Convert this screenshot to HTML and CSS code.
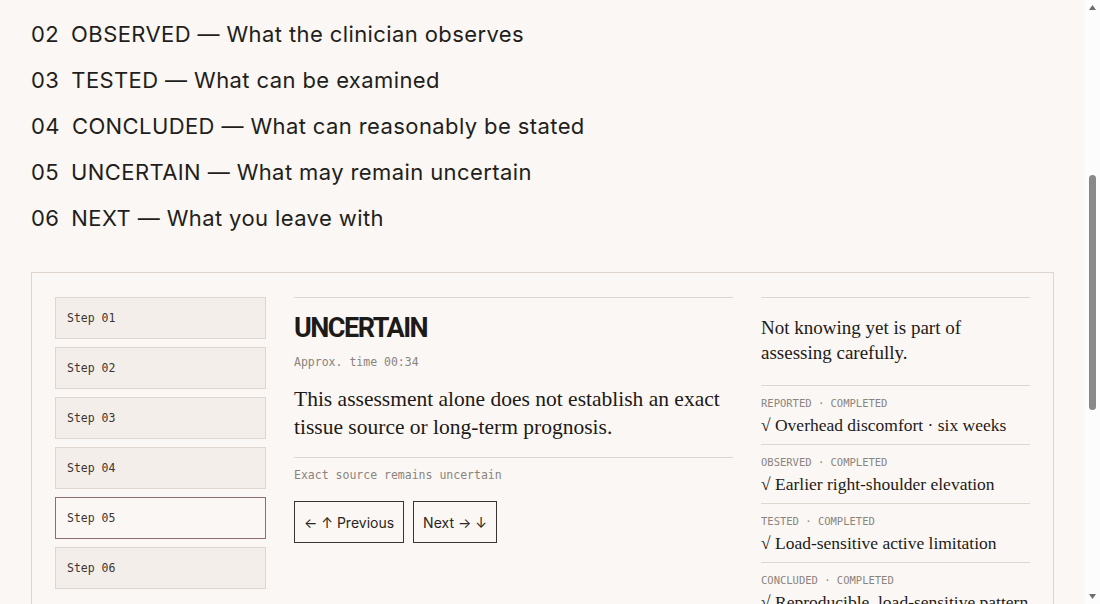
FILE: index.html
```html
<!DOCTYPE html>
<html lang="en">
<head>
<meta charset="UTF-8">
<title>Shoulder assessment walkthrough</title>
<link rel="stylesheet" href="styles.css">
</head>
<body>
<div class="page">
<header class="intro">
<p class="eyebrow">Shoulder assessment · Walkthrough</p>
<h1>How a shoulder assessment unfolds, one step at a time</h1>
<p class="summary">Six short steps, from what you report to what you leave with. Each one takes under a minute to read.</p>
</header>

<ol class="outline">
<li id="outline-01"><span class="num">01</span><span class="tag">REPORTED</span> — What the clinician hears</li>
<li id="outline-02"><span class="num">02</span><span class="tag">OBSERVED</span> — What the clinician observes</li>
<li id="outline-03"><span class="num">03</span><span class="tag">TESTED</span> — What can be examined</li>
<li id="outline-04"><span class="num">04</span><span class="tag">CONCLUDED</span> — What can reasonably be stated</li>
<li id="outline-05"><span class="num">05</span><span class="tag">UNCERTAIN</span> — What may remain uncertain</li>
<li id="outline-06"><span class="num">06</span><span class="tag">NEXT</span> — What you leave with</li>
</ol>

<section class="walkthrough">
<div class="steps">
<button class="step">Step 01</button>
<button class="step">Step 02</button>
<button class="step">Step 03</button>
<button class="step">Step 04</button>
<button class="step is-current">Step 05</button>
<button class="step">Step 06</button>
</div>

<div class="stage">
<h2>UNCERTAIN</h2>
<p class="meta">Approx. time 00:34</p>
<p class="body">This assessment alone does not establish an exact tissue source or long-term prognosis.</p>
<p class="note">Exact source remains uncertain</p>
<div class="nav">
<button>← ↑ Previous</button>
<button>Next → ↓</button>
</div>
</div>

<aside class="record">
<p class="lead">Not knowing yet is part of assessing carefully.</p>
<div class="entry">
<p class="label">REPORTED · COMPLETED</p>
<p class="value">√ Overhead discomfort · six weeks</p>
</div>
<div class="entry">
<p class="label">OBSERVED · COMPLETED</p>
<p class="value">√ Earlier right-shoulder elevation</p>
</div>
<div class="entry">
<p class="label">TESTED · COMPLETED</p>
<p class="value">√ Load-sensitive active limitation</p>
</div>
<div class="entry">
<p class="label">CONCLUDED · COMPLETED</p>
<p class="value">√ Reproducible, load-sensitive pattern</p>
</div>
</aside>
</section>

<footer class="footer">
<p>This walkthrough explains a typical assessment. It is not a diagnosis and does not replace a conversation with your clinician.</p>
</footer>
</div>

<div class="scrollbar">
<span class="scrollbar-btn"><svg width="7" height="5" viewBox="0 0 7 5"><polygon points="0,5 3.5,0 7,5" fill="#6f6c6d"/></svg></span>
<div class="scrollbar-track"><div class="scrollbar-thumb"></div></div>
<span class="scrollbar-btn"><svg width="7" height="5" viewBox="0 0 7 5"><polygon points="0,0 7,0 3.5,5" fill="#6f6c6d"/></svg></span>
</div>

<script>
const bar = document.querySelector('.scrollbar');
const track = document.querySelector('.scrollbar-track');
const thumb = document.querySelector('.scrollbar-thumb');

// keep the bar beside the visible part of the page and size the thumb
function syncBar() {
const total = document.documentElement.scrollHeight;
bar.style.marginTop = window.scrollY + 'px';
bar.style.height = window.innerHeight + 'px';
const h = track.clientHeight;
thumb.style.height = (h * window.innerHeight / total) + 'px';
thumb.style.marginTop = (h * window.scrollY / total) + 'px';
}

document.getElementById('outline-02').scrollIntoView();
syncBar();
window.addEventListener('scroll', syncBar);
window.addEventListener('resize', syncBar);
</script>
</body>
</html>
```

FILE: styles.css
```css
body {
margin: 0;
display: flex;
align-items: flex-start;
background: #fbf7f4;
color: #1d1a18;
font-family: Inter, "Noto Sans", sans-serif;
}
.page {
flex: 1;
min-width: 0;
padding: 0 31px 315px;
}
.scrollbar {
width: 15px;
flex-shrink: 0;
display: flex;
flex-direction: column;
background: #fdfcfc;
}
.scrollbar-btn {
height: 15px;
display: flex;
align-items: center;
justify-content: center;
}
.scrollbar-track {
flex: 1;
}
.scrollbar-thumb {
width: 7px;
margin-left: 4px;
border-radius: 4px;
background: #8a8788;
}
.intro {
padding-top: 138px;
margin-bottom: 36px;
}
.eyebrow {
font: 12px/16px "DejaVu Sans Mono", monospace;
color: #8a847f;
margin: 0 0 16px;
}
.intro h1 {
font: 700 40px/46px Roboto, sans-serif;
letter-spacing: -1px;
margin: 0 0 20px;
max-width: 760px;
}
.summary {
font: 19px/28px "Liberation Serif", serif;
margin: 0;
max-width: 560px;
}
.outline {
list-style: none;
margin: 0 0 31px;
padding: 0;
}
.outline li {
font-size: 22px;
line-height: 46px;
letter-spacing: 0.4px;
color: #221e1b;
scroll-margin-top: 11px;
}
.outline .num {
margin-right: 12px;
}
.walkthrough {
border: 1px solid #ddd5cf;
padding: 24px 23px;
display: grid;
grid-template-columns: 211px 1fr 269px;
gap: 28px;
align-items: start;
}
.steps {
display: flex;
flex-direction: column;
gap: 8px;
}
.step {
height: 42px;
border: 1px solid #ded6d0;
background: #f3eee9;
color: #3b3632;
font: 11.5px "DejaVu Sans Mono", monospace;
text-align: left;
padding: 0 11px;
cursor: pointer;
}
.step.is-current {
background: #fbf7f4;
border-color: #8c6f6c;
}
.stage {
border-top: 1px solid #ddd7d2;
padding-top: 17px;
}
.stage h2 {
font: 700 27px/1 Roboto, sans-serif;
letter-spacing: -1.5px;
margin: 0;
}
.meta, .note {
font: 11.5px/16px "DejaVu Sans Mono", monospace;
color: #8a847f;
margin: 0;
}
.meta {
margin-top: 12px;
}
.body {
font: 21.5px/28px "Liberation Serif", serif;
margin: 15px 0 16px;
}
.note {
border-top: 1px solid #ddd7d2;
padding-top: 9px;
}
.nav {
display: flex;
gap: 9px;
margin-top: 18px;
}
.nav button {
height: 42px;
padding: 0 9px;
border: 1px solid #3a3431;
background: transparent;
color: #2a2522;
font: 14px Inter, sans-serif;
cursor: pointer;
}
.record {
border-top: 1px solid #ddd7d2;
}
.lead {
font: 19px/25px "Liberation Serif", serif;
margin: 0;
padding: 17px 0 20px;
}
.entry {
border-top: 1px solid #ddd7d2;
padding: 10px 0 8px;
}
.label {
font: 10.5px/14px "DejaVu Sans Mono", monospace;
color: #8a847f;
margin: 0 0 4px;
}
.value {
font: 17.5px/22px "Liberation Serif", serif;
margin: 0;
}
.footer {
margin-top: 48px;
font: 13px/20px "DejaVu Sans Mono", monospace;
color: #8a847f;
max-width: 560px;
}
```
